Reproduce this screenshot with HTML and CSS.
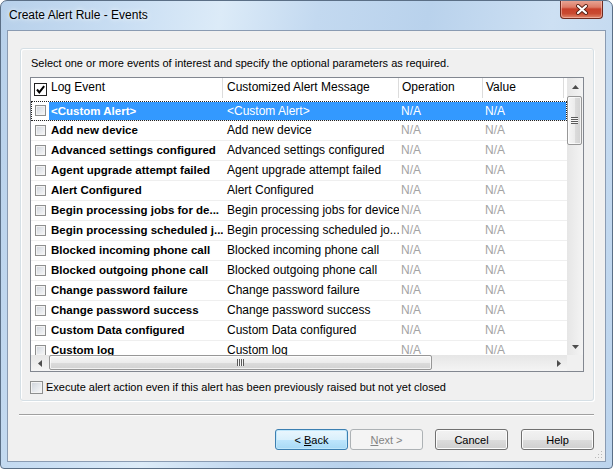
FILE: index.html
```html
<!DOCTYPE html>
<html lang="en">
<head>
<meta charset="UTF-8">
<title>Create Alert Rule - Events</title>
<link rel="stylesheet" href="styles.css">
</head>
<body>

<div class="window">
  <div class="titlebar">
    <span class="title">Create Alert Rule - Events</span>
    <div class="close-btn">
      <svg width="14" height="11" viewBox="0 0 14 11">
        <path d="M3 2 L11 9 M11 2 L3 9" stroke="#5a2418" stroke-width="4" stroke-linecap="round"/>
        <path d="M3 2 L11 9 M11 2 L3 9" stroke="#fff" stroke-width="2.2" stroke-linecap="round"/>
      </svg>
    </div>
  </div>

  <div class="client">
    <div class="group">
      <p class="intro">Select one or more events of interest and specify the optional parameters as required.</p>

      <div class="listview">
        <div class="lv-main">
          <div class="lv-area">
            <div class="lv-header">
              <div class="h0"><span class="cb-checked">
                <svg width="11" height="11" viewBox="0 0 11 11"><path d="M2 5.5 L4.3 8.3 L9.2 2.2" fill="none" stroke="#000" stroke-width="2"/></svg>
              </span></div>
              <div class="hcell h1">Log Event</div>
              <div class="hcell h2">Customized Alert Message</div>
              <div class="hcell h3">Operation</div>
              <div class="hcell h4">Value</div>
            </div>

            <div class="lv-rows">
              <div class="row sel">
                <div class="c0"><span class="cb"></span></div>
                <div class="cells"><div class="c1">&lt;Custom Alert&gt;</div><div class="c2">&lt;Custom Alert&gt;</div><div class="c3">N/A</div><div class="c4">N/A</div></div>
              </div>
              <div class="row">
                <div class="c0"><span class="cb"></span></div>
                <div class="cells"><div class="c1">Add new device</div><div class="c2">Add new device</div><div class="c3">N/A</div><div class="c4">N/A</div></div>
              </div>
              <div class="row">
                <div class="c0"><span class="cb"></span></div>
                <div class="cells"><div class="c1">Advanced settings configured</div><div class="c2">Advanced settings configured</div><div class="c3">N/A</div><div class="c4">N/A</div></div>
              </div>
              <div class="row">
                <div class="c0"><span class="cb"></span></div>
                <div class="cells"><div class="c1">Agent upgrade attempt failed</div><div class="c2">Agent upgrade attempt failed</div><div class="c3">N/A</div><div class="c4">N/A</div></div>
              </div>
              <div class="row">
                <div class="c0"><span class="cb"></span></div>
                <div class="cells"><div class="c1">Alert Configured</div><div class="c2">Alert Configured</div><div class="c3">N/A</div><div class="c4">N/A</div></div>
              </div>
              <div class="row">
                <div class="c0"><span class="cb"></span></div>
                <div class="cells"><div class="c1">Begin processing jobs for de...</div><div class="c2">Begin processing jobs for device</div><div class="c3">N/A</div><div class="c4">N/A</div></div>
              </div>
              <div class="row">
                <div class="c0"><span class="cb"></span></div>
                <div class="cells"><div class="c1">Begin processing scheduled j...</div><div class="c2">Begin processing scheduled jo...</div><div class="c3">N/A</div><div class="c4">N/A</div></div>
              </div>
              <div class="row">
                <div class="c0"><span class="cb"></span></div>
                <div class="cells"><div class="c1">Blocked incoming phone call</div><div class="c2">Blocked incoming phone call</div><div class="c3">N/A</div><div class="c4">N/A</div></div>
              </div>
              <div class="row">
                <div class="c0"><span class="cb"></span></div>
                <div class="cells"><div class="c1">Blocked outgoing phone call</div><div class="c2">Blocked outgoing phone call</div><div class="c3">N/A</div><div class="c4">N/A</div></div>
              </div>
              <div class="row">
                <div class="c0"><span class="cb"></span></div>
                <div class="cells"><div class="c1">Change password failure</div><div class="c2">Change password failure</div><div class="c3">N/A</div><div class="c4">N/A</div></div>
              </div>
              <div class="row">
                <div class="c0"><span class="cb"></span></div>
                <div class="cells"><div class="c1">Change password success</div><div class="c2">Change password success</div><div class="c3">N/A</div><div class="c4">N/A</div></div>
              </div>
              <div class="row">
                <div class="c0"><span class="cb"></span></div>
                <div class="cells"><div class="c1">Custom Data configured</div><div class="c2">Custom Data configured</div><div class="c3">N/A</div><div class="c4">N/A</div></div>
              </div>
              <div class="row">
                <div class="c0"><span class="cb"></span></div>
                <div class="cells"><div class="c1">Custom log</div><div class="c2">Custom log</div><div class="c3">N/A</div><div class="c4">N/A</div></div>
              </div>
            </div>
          </div>

          <div class="vscroll">
            <div class="sb-btn"><svg width="7" height="4" viewBox="0 0 7 4"><path d="M3.5 0 L7 4 L0 4 Z" fill="#4d4d4d"/></svg></div>
            <div class="sb-track">
              <div class="vthumb">
                <span class="vgrip"></span>
              </div>
            </div>
            <div class="sb-btn"><svg width="7" height="4" viewBox="0 0 7 4"><path d="M0 0 L7 0 L3.5 4 Z" fill="#4d4d4d"/></svg></div>
          </div>
        </div>

        <div class="lv-bottom">
          <div class="hscroll">
            <div class="sb-btn h"><svg width="4" height="7" viewBox="0 0 4 7"><path d="M0 3.5 L4 0 L4 7 Z" fill="#4d4d4d"/></svg></div>
            <div class="sb-track h">
              <div class="hthumb"><span class="hgrip"></span></div>
            </div>
            <div class="sb-btn h"><svg width="4" height="7" viewBox="0 0 4 7"><path d="M0 0 L4 3.5 L0 7 Z" fill="#4d4d4d"/></svg></div>
          </div>
          <div class="corner"></div>
        </div>
      </div>

      <label class="option"><span class="cb big"></span>Execute alert action even if this alert has been previously raised but not yet closed</label>
    </div>

    <div class="separator"></div>

    <div class="buttons">
      <button class="btn default">&lt; <u>B</u>ack</button>
      <button class="btn disabled"><u>N</u>ext &gt;</button>
      <button class="btn cancel">Cancel</button>
      <button class="btn">Help</button>
    </div>

    <svg class="grip" width="9" height="9" viewBox="0 0 9 9">
      <rect x="7" y="1" width="1" height="1" fill="#b8b8b8"/>
      <rect x="4" y="4" width="1" height="1" fill="#b8b8b8"/>
      <rect x="7" y="4" width="1" height="1" fill="#b8b8b8"/>
      <rect x="1" y="7" width="1" height="1" fill="#b8b8b8"/>
      <rect x="4" y="7" width="1" height="1" fill="#b8b8b8"/>
      <rect x="7" y="7" width="1" height="1" fill="#b8b8b8"/>
    </svg>
  </div>
</div>

</body>
</html>
```

FILE: styles.css
```css
* {
  box-sizing: border-box;
}
body {
  margin: 0;
  font-family: "Liberation Sans", Arial, sans-serif;
  font-size: 12px;
  color: #000;
  background: #fff;
}
.window {
  width: 613px;
  height: 469px;
  border: 1px solid #5b6f86;
  border-radius: 7px 7px 4px 4px;
  background: linear-gradient(100deg, #b7d0ea 0%, #c9def3 18%, #dcebf8 32%, #c3d9f0 46%, #b9d2ec 62%, #cde0f3 80%, #bcd4ed 100%);
  display: flex;
  flex-direction: column;
  overflow: hidden;
}
.titlebar {
  height: 29px;
  display: flex;
  justify-content: space-between;
  align-items: flex-start;
  padding: 0 9px 0 8px;
}
.title {
  line-height: 29px;
  text-shadow: 0 0 6px #eef5fc, 0 0 3px #eef5fc;
}
.close-btn {
  width: 43px;
  height: 19px;
  margin-top: -1px;
  border: 1px solid #6e2a1f;
  border-top: none;
  border-radius: 0 0 4px 4px;
  background: linear-gradient(#e9a999 0%, #dd7b66 40%, #c8402a 50%, #c94a31 75%, #e0866b 100%);
  box-shadow: inset 0 0 0 1px rgba(255, 210, 200, 0.5);
  display: flex;
  align-items: center;
  justify-content: center;
}

/* client area */
.client {
  flex: 1;
  margin: 0 6px 6px;
  border: 1px solid #8a9bb2;
  background: #f0f0f0;
  position: relative;
  display: flex;
  flex-direction: column;
}
.group {
  margin: 17px 11px 0 12px;
  padding: 7px 9px 5px;
  border: 1px solid #d5dfe5;
  border-radius: 3px;
  box-shadow: inset 1px 1px 0 #fff, 1px 1px 0 #fff;
}
.intro {
  margin: 0 0 6px 1px;
  line-height: 15px;
  font-size: 11px;
}

/* list view */
.listview {
  height: 295px;
  border: 1px solid #828790;
  background: #fff;
  display: flex;
  flex-direction: column;
}
.lv-main {
  flex: 1;
  display: flex;
  min-height: 0;
}
.lv-area {
  flex: 1;
  overflow: hidden;
}
.lv-header {
  height: 23px;
  display: flex;
  align-items: flex-start;
}
.h0 {
  width: 18px;
  height: 23px;
  padding-left: 3px;
  display: flex;
  align-items: center;
}
.hcell {
  height: 20px;
  line-height: 19px;
  border-right: 1px solid #dcdcdc;
  white-space: nowrap;
  overflow: hidden;
}
.h1 { width: 174px; padding-left: 2px; }
.h2 { width: 176px; padding-left: 4px; }
.h3 { width: 84px; padding-left: 3px; }
.h4 { width: 81px; padding-left: 3px; }

.lv-rows {
  height: 254px;
  overflow: hidden;
}
.row {
  display: flex;
  height: 20px;
  border-bottom: 1px solid #efefef;
}
.c0 {
  width: 18px;
  padding-left: 4px;
  display: flex;
  align-items: center;
}
.cells {
  flex: 1;
  display: flex;
  line-height: 19px;
  white-space: nowrap;
}
.cells div {
  overflow: hidden;
}
.c1 { width: 174px; padding-left: 2px; font-weight: bold; font-size: 11.5px; }
.c2 { width: 176px; padding-left: 4px; }
.c3 { width: 84px; padding-left: 2px; color: #a3a3a3; }
.c4 { width: 81px; padding-left: 2px; color: #a3a3a3; }

.row.sel {
  outline: 1px dotted #222;
  outline-offset: -1px;
}
.row.sel .cells {
  background: #3399ff;
  color: #fff;
  margin: 1px 1px 0 0;
  line-height: 18px;
}
.row.sel .cells div {
  color: #fff;
}

/* checkboxes */
.cb {
  width: 11px;
  height: 11px;
  border: 1px solid #8e8f8f;
  background: linear-gradient(135deg, #cdd2d9 0%, #e4e7eb 50%, #f8f8f8 100%);
  box-shadow: inset 0 0 0 1px #f3f3f3;
  display: inline-block;
}
.cb.big {
  width: 13px;
  height: 13px;
}
.cb-checked {
  width: 13px;
  height: 13px;
  border: 1px solid #222;
  background: #fff;
  display: flex;
  align-items: center;
  justify-content: center;
}

/* scrollbars */
.vscroll {
  width: 16px;
  display: flex;
  flex-direction: column;
  background: linear-gradient(to right, #e6e6e6, #f4f4f4);
}
.sb-btn {
  height: 17px;
  display: flex;
  align-items: center;
  justify-content: center;
}
.sb-btn.h {
  width: 17px;
  height: auto;
}
.sb-track {
  flex: 1;
}
.vthumb {
  width: 15px;
  height: 49px;
  margin-top: 1px;
  border: 1px solid #979797;
  border-radius: 2px;
  background: linear-gradient(to right, #f6f6f6 0%, #ececec 50%, #dcdcdc 51%, #d2d2d2 100%);
  box-shadow: inset 0 0 0 1px rgba(255, 255, 255, 0.7);
  display: flex;
  align-items: center;
  justify-content: center;
}
.vgrip {
  width: 7px;
  height: 7px;
  background: repeating-linear-gradient(#5a5a5a 0 1px, #f6f6f6 1px 2px);
}
.lv-bottom {
  height: 16px;
  display: flex;
}
.hscroll {
  flex: 1;
  display: flex;
  background: linear-gradient(#e6e6e6, #f4f4f4);
}
.sb-track.h {
  display: flex;
}
.hthumb {
  width: 383px;
  height: 15px;
  margin-left: 1px;
  border: 1px solid #979797;
  border-radius: 2px;
  background: linear-gradient(#f6f6f6 0%, #ececec 50%, #dcdcdc 51%, #d2d2d2 100%);
  box-shadow: inset 0 0 0 1px rgba(255, 255, 255, 0.7);
  display: flex;
  align-items: center;
  justify-content: center;
}
.hgrip {
  width: 7px;
  height: 7px;
  background: repeating-linear-gradient(to right, #5a5a5a 0 1px, #f6f6f6 1px 2px);
}
.corner {
  width: 16px;
  background: #f0f0f0;
}

.option {
  margin-top: 8px;
  height: 15px;
  line-height: 15px;
  font-size: 11px;
  display: flex;
  align-items: center;
  gap: 3px;
}

.separator {
  margin: 13px 11px 0 11px;
  border-top: 1px solid #a0a0a0;
  border-bottom: 1px solid #fff;
}

/* buttons */
.buttons {
  display: flex;
  justify-content: flex-end;
  margin-top: 13px;
  padding-right: 11px;
}
.btn {
  width: 73px;
  height: 21px;
  padding: 0;
  font-family: inherit;
  font-size: 11px;
  color: #000;
  border: 1px solid #707070;
  border-radius: 3px;
  background: linear-gradient(#f2f2f2 0%, #ebebeb 50%, #dddddd 51%, #cfcfcf 100%);
  box-shadow: inset 0 0 0 1px #fcfcfc;
}
.btn.default {
  margin-right: 2px;
  border-color: #3c7fb1;
  background: linear-gradient(#eaf6fd 0%, #d9f0fc 50%, #bee6fd 51%, #a7d9f5 100%);
  box-shadow: inset 0 0 0 1px #c0e7fb;
}
.btn.disabled {
  margin-right: 12px;
  color: #838383;
  border-color: #adb2b5;
  background: #f4f4f4;
  box-shadow: none;
}
.btn.cancel {
  margin-right: 13px;
}

.grip {
  position: absolute;
  right: 2px;
  bottom: 2px;
}
```
